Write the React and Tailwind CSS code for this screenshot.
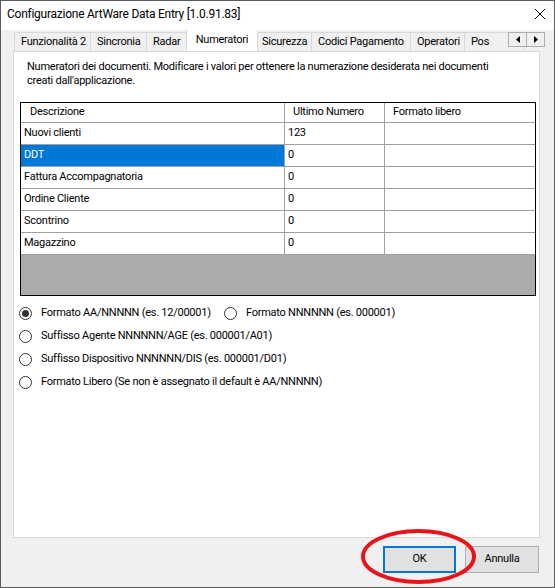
import React from 'react';

// Schede del controllo TabControl (larghezze prese dallo screenshot)
const TABS = [
  { label: 'Funzionalità 2', w: 'w-[77px]' },
  { label: 'Sincronia', w: 'w-[57px]' },
  { label: 'Radar', w: 'w-[43px]' },
  { label: 'Numeratori', w: 'w-[66px]', active: true },
  { label: 'Sicurezza', w: 'w-[57px]' },
  { label: 'Codici Pagamento', w: 'w-[100px]' },
  { label: 'Operatori', w: 'w-[55px]' },
  { label: 'Pos', w: 'w-[60px]' },
];

const ROWS = [
  { desc: 'Nuovi clienti', num: '123' },
  { desc: 'DDT', num: '0', selected: true },
  { desc: 'Fattura Accompagnatoria', num: '0' },
  { desc: 'Ordine Cliente', num: '0' },
  { desc: 'Scontrino', num: '0' },
  { desc: 'Magazzino', num: '0' },
];

const Radio = ({ checked }) => (
  <span className="w-[13px] h-[13px] shrink-0 rounded-full border border-[#333333] bg-white flex items-center justify-center">
    {checked && <span className="w-[7px] h-[7px] rounded-full bg-[#333333]" />}
  </span>
);

const RadioItem = ({ label, checked, className = '' }) => (
  <div className={`flex items-center gap-[9px] ${className}`}>
    <Radio checked={checked} />
    <span className="whitespace-nowrap">{label}</span>
  </div>
);

export default function App() {
  return (
    <div className="relative w-[555px] h-[588px] flex flex-col border border-[#5a5a5a] bg-[#f0f0f0] text-black text-[11px] tracking-[-0.25px] font-[Roboto,'Liberation_Sans',sans-serif]">
      {/* Barra del titolo */}
      <div className="h-[29px] shrink-0 bg-white flex items-center justify-between pl-[6px] pb-[3px]">
        <span className="text-[12px]">Configurazione ArtWare Data Entry [1.0.91.83]</span>
        <svg width="12" height="12" viewBox="0 0 12 12" className="mr-[8px]">
          <path d="M1 1 L11 11 M11 1 L1 11" stroke="#000" strokeWidth="1" fill="none" />
        </svg>
      </div>

      {/* Linguette */}
      <div className="relative h-[21px] shrink-0 flex items-end pl-[13px] overflow-hidden">
        {TABS.map((t) =>
          t.active ? (
            <div
              key={t.label}
              className={`${t.w} relative z-10 -mx-[2px] box-content px-[2px] h-[22px] -mb-px -ml-[3px] pb-[1px] bg-white border border-b-0 border-[#d9d9d9] flex items-center justify-center`}
            >
              {t.label}
            </div>
          ) : (
            <div
              key={t.label}
              className={`${t.w} shrink-0 h-[19px] -ml-px first:ml-0 pt-[1px] bg-[#f0f0f0] border border-b-0 border-[#d9d9d9] flex items-center pl-[6px]`}
            >
              {t.label}
            </div>
          )
        )}
        <div className="absolute left-[507px] top-[2px] z-20 flex">
          <div className="w-[19px] h-[15px] border border-[#adadad] bg-[#f0f0f0] flex items-center justify-center">
            <svg width="4" height="7" viewBox="0 0 4 7"><path d="M4 0 L0 3.5 L4 7 Z" fill="#000" /></svg>
          </div>
          <div className="w-[19px] h-[15px] -ml-px border border-[#adadad] bg-[#f0f0f0] flex items-center justify-center">
            <svg width="4" height="7" viewBox="0 0 4 7"><path d="M0 0 L4 3.5 L0 7 Z" fill="#000" /></svg>
          </div>
        </div>
      </div>

      {/* Pannello della scheda */}
      <div className="ml-[12px] w-[527px] h-[487px] shrink-0 border border-[#d9d9d9] bg-white flex flex-col">
        <p className="pt-[8px] pl-[13px] leading-[14px]">
          Numeratori dei documenti. Modificare i valori per ottenere la numerazione desiderata nei documenti
          <br />
          creati dall'applicazione.
        </p>

        <div className="mt-[14px] ml-[6px] w-[516px] border border-black">
          <div className="h-[20px] flex border-b border-[#a0a0a0]">
            <div className="w-[264px] border-r border-[#a0a0a0] pl-[9px] flex items-center">Descrizione</div>
            <div className="w-[100px] border-r border-[#a0a0a0] pl-[8px] flex items-center">Ultimo Numero</div>
            <div className="flex-1 pl-[8px] flex items-center">Formato libero</div>
          </div>
          {ROWS.map((r) => (
            <div key={r.desc} className="h-[22px] flex border-b border-[#a0a0a0]">
              <div
                className={`w-[264px] border-r border-[#a0a0a0] pl-[3px] flex items-center ${
                  r.selected ? 'bg-[#0078d7] text-white' : ''
                }`}
              >
                {r.desc}
              </div>
              <div className="w-[100px] border-r border-[#a0a0a0] pl-[3px] flex items-center">{r.num}</div>
              <div className="flex-1" />
            </div>
          ))}
          <div className="h-[40px] bg-[#ababab]" />
        </div>

        <div className="mt-[6px] ml-[5px] flex flex-col">
          <div className="h-[23px] flex items-center">
            <RadioItem className="w-[205px]" checked label="Formato AA/NNNNN (es. 12/00001)" />
            <RadioItem className="gap-[7px]" label="Formato NNNNNN (es. 000001)" />
          </div>
          <div className="h-[23px] flex items-center">
            <RadioItem label="Suffisso Agente NNNNNN/AGE (es. 000001/A01)" />
          </div>
          <div className="h-[23px] flex items-center">
            <RadioItem label="Suffisso Dispositivo NNNNNN/DIS (es. 000001/D01)" />
          </div>
          <div className="h-[23px] flex items-center">
            <RadioItem label="Formato Libero (Se non è assegnato il default è AA/NNNNN)" />
          </div>
        </div>
      </div>

      {/* Pulsanti */}
      <div className="mt-[8px] pr-[15px] flex justify-end gap-[9px]">
        <button className="w-[73px] h-[27px] border-2 border-[#0078d7] bg-[#e1e1e1] flex items-center justify-center">
          OK
        </button>
        <button className="w-[74px] h-[27px] border border-[#adadad] bg-[#e1e1e1] flex items-center justify-center">
          Annulla
        </button>
      </div>

      {/* Cerchio rosso di evidenziazione */}
      <svg className="absolute left-[357px] top-[525px] pointer-events-none" width="124" height="62" viewBox="0 0 124 62">
        <ellipse cx="60.5" cy="30.5" rx="55.5" ry="25.5" fill="none" stroke="#e8141c" strokeWidth="4" />
      </svg>
    </div>
  );
}
